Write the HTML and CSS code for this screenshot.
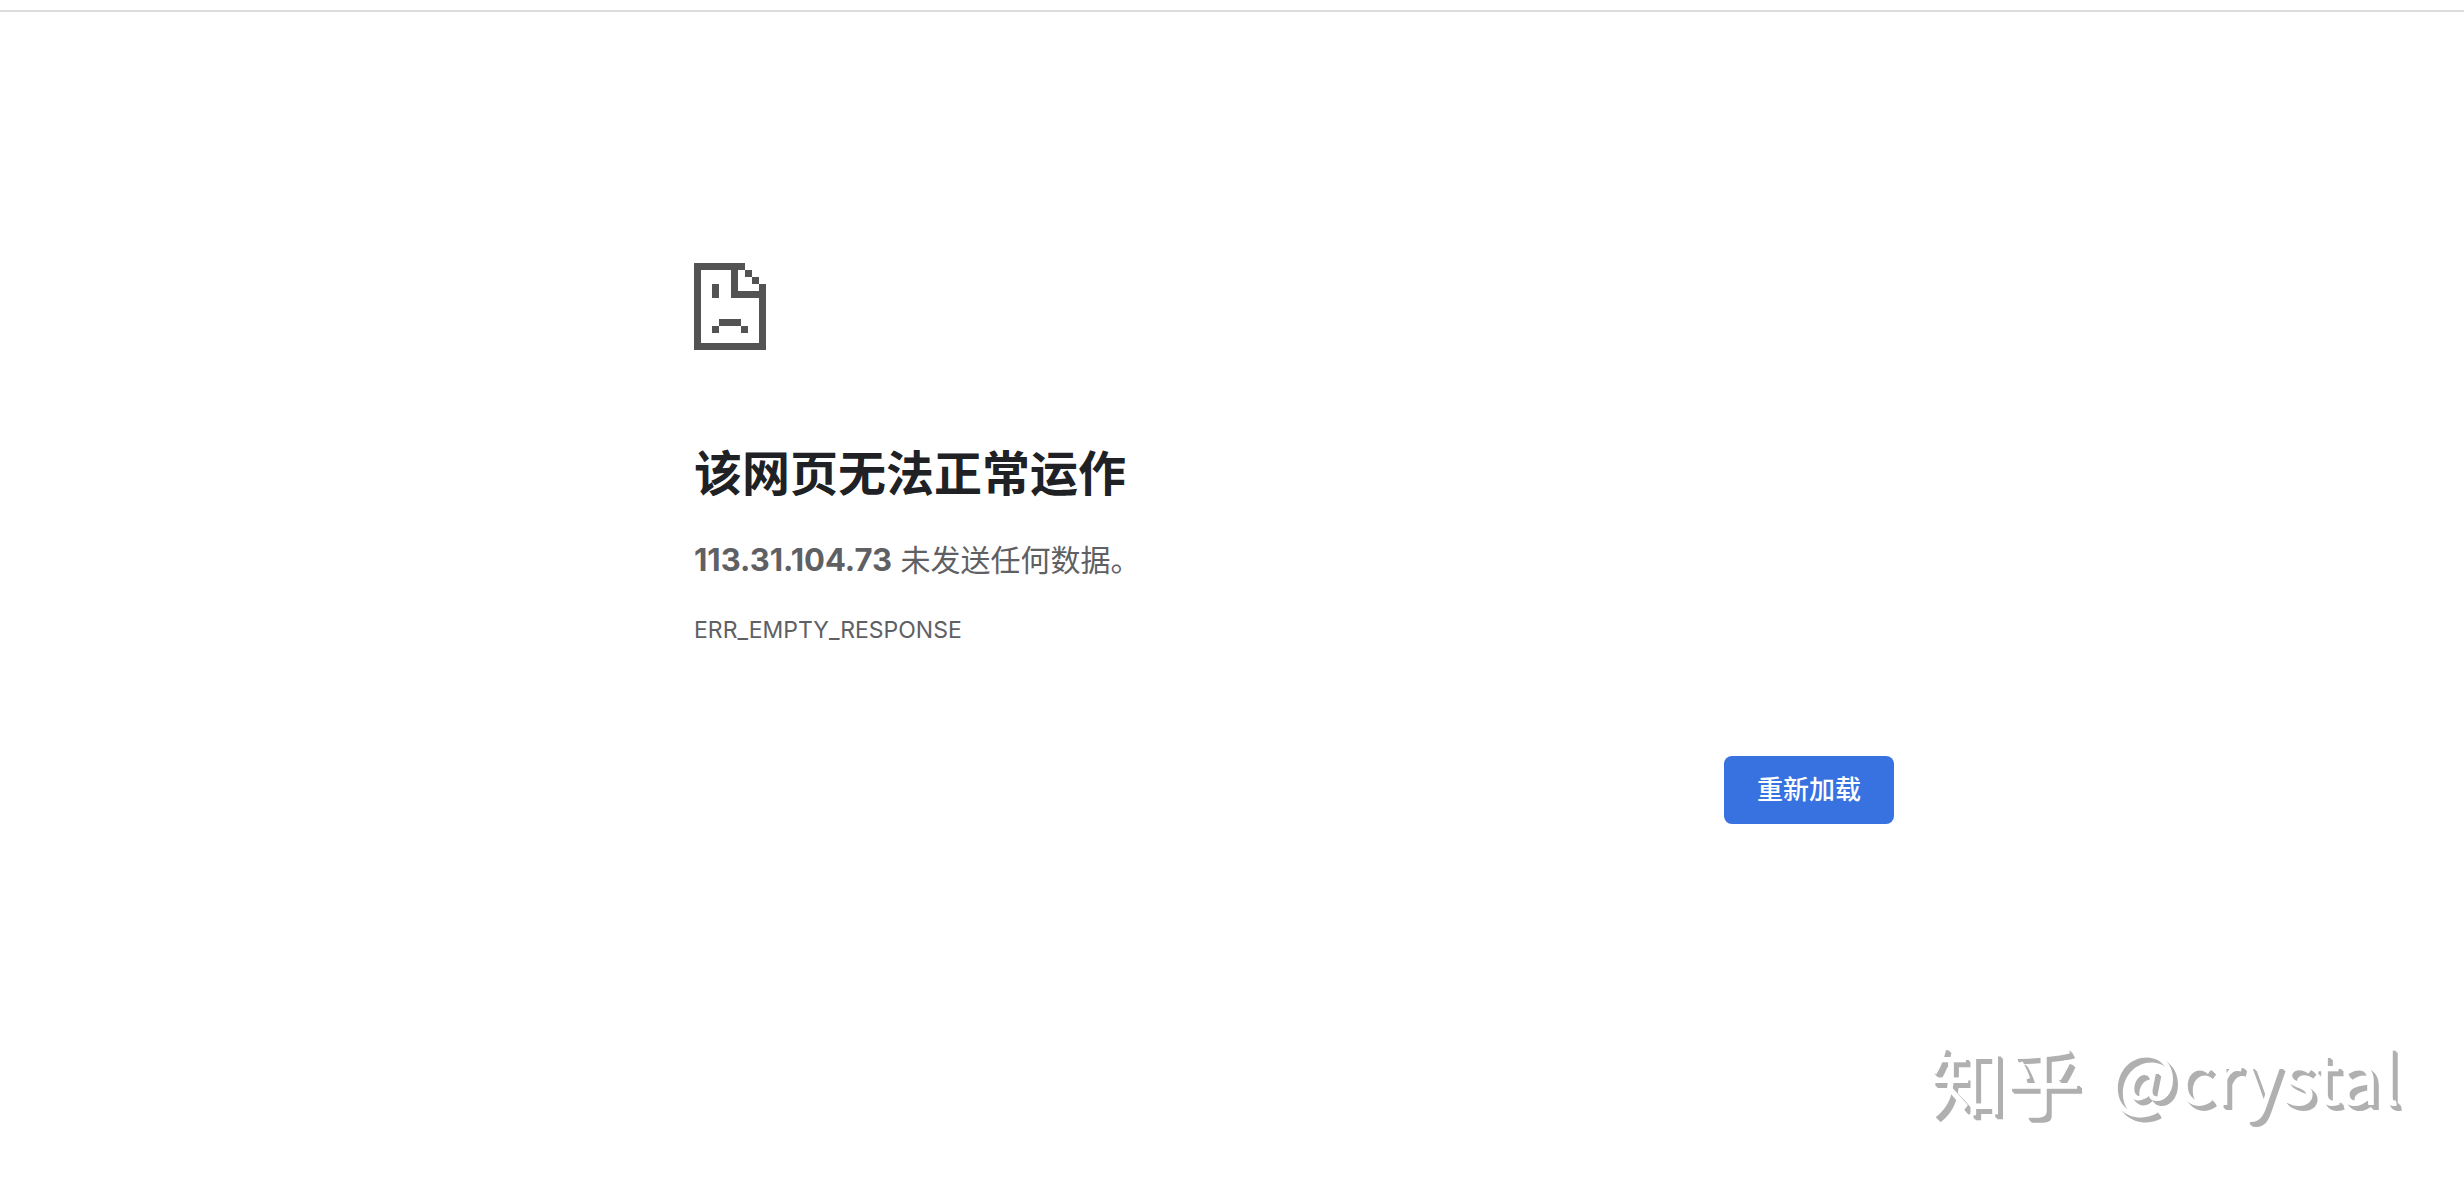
FILE: index.html
```
<!DOCTYPE html>
<html lang="zh-CN">
<head>
  <meta charset="UTF-8" />
  <meta name="viewport" content="width=device-width, initial-scale=1" />
  <title>113.31.104.73</title>
  <link rel="stylesheet" href="styles.css">
</head>
<body>

  <main class="content">
    <svg class="icon" width="72" height="87" viewBox="0 0 72 87" shape-rendering="crispEdges" aria-hidden="true">
      <!-- page outline -->
      <path d="M0 0h51v7H7v73h58V21h7v66H0z" />
      <!-- folded corner -->
      <path d="M37 7h7v21h21v7H37zM51 7h7v7h-7zM58 14h7v7h-7z" />
      <!-- sad face -->
      <path d="M18 21h7v14h-7zM25 56h22v7H25zM18 63h7v7h-7zM47 63h7v7h-7z" />
    </svg>

    <h1>该网页无法正常运作</h1>
    <p><strong>113.31.104.73</strong> 未发送任何数据。</p>
    <div class="error-code">ERR_EMPTY_RESPONSE</div>

    <div class="buttons">
      <button type="button" onclick="location.reload()">重新加载</button>
    </div>
  </main>

  <footer class="watermark">
    <span>知乎</span>
    <span class="author">@crystal</span>
  </footer>

</body>
</html>
```

FILE: styles.css
```
* {
  box-sizing: border-box;
}
body {
  margin: 0;
  padding: 10px 0 0 124px;
  min-height: 100vh;
  display: flex;
  flex-direction: column;
  background: #fff linear-gradient(#dcdcdc, #dcdcdc) 0 10px / 100% 2px no-repeat;
  color: #5f6063;
  font-family: Inter, "Noto Sans CJK SC", sans-serif;
  font-size: 30px;
}
.content {
  width: 100%;
  max-width: 1200px;
  margin: 0 auto;
  padding-top: 253px;
}
.icon {
  display: block;
  fill: #535353;
}
h1 {
  margin: 94px 0 32px;
  color: #202124;
  font-size: 48px;
  font-weight: 700;
  line-height: 60px;
}
p {
  margin: 0;
  line-height: 48px;
}
strong {
  font-size: 31px;
  font-weight: 700;
}
.error-code {
  margin-top: 28px;
  font-size: 23px;
  line-height: 36px;
}
.buttons {
  display: flex;
  justify-content: flex-end;
  margin-top: 108px;
}
button {
  padding: 14px 33px;
  border: 0;
  border-radius: 8px;
  background: #3871e0;
  color: #fff;
  font-family: inherit;
  font-size: 26px;
  font-weight: 500;
  line-height: 40px;
  cursor: pointer;
}
button:hover {
  background: #2a62d0;
}
.watermark {
  display: flex;
  justify-content: flex-end;
  align-items: flex-start;
  gap: 28px;
  margin-top: auto;
  padding: 0 64px 62px 0;
  color: #fff;
  font-family: "Noto Sans CJK SC", sans-serif;
  font-size: 76px;
  line-height: 112px;
  text-shadow: 3px 3px 0 #b0b0b0, 4px 4px 0 #b0b0b0, 5px 5px 0 #b0b0b0;
}
.author {
  font-size: 72px;
  line-height: 104px;
}
```
